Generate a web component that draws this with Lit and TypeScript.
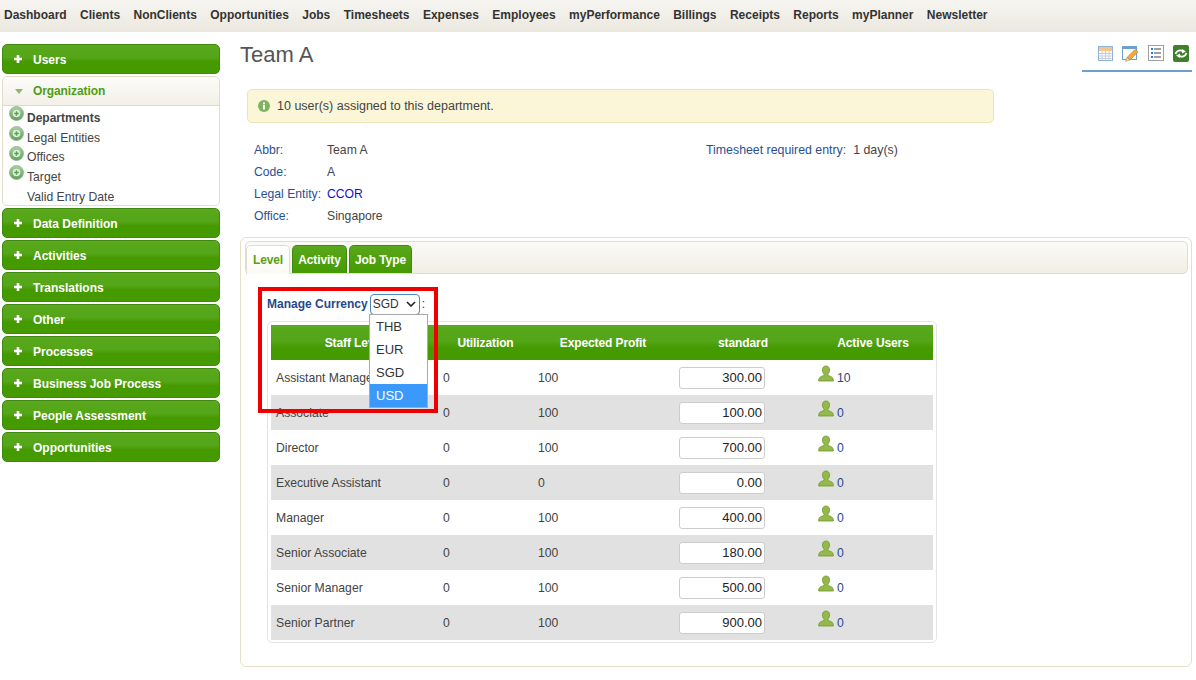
import { LitElement, html, css, svg } from "lit";
import { customElement } from "lit/decorators.js";

const NAV = ["Dashboard","Clients","NonClients","Opportunities","Jobs","Timesheets","Expenses","Employees","myPerformance","Billings","Receipts","Reports","myPlanner","Newsletter"];
const ROWS: [string,string,string,string,string][] = [
  ["Assistant Manager","0","100","300.00","10"],
  ["Associate","0","100","100.00","0"],
  ["Director","0","100","700.00","0"],
  ["Executive Assistant","0","0","0.00","0"],
  ["Manager","0","100","400.00","0"],
  ["Senior Associate","0","100","180.00","0"],
  ["Senior Manager","0","100","500.00","0"],
  ["Senior Partner","0","100","900.00","0"],
];
const plus = svg`<svg class="pl" width="10" height="10" viewBox="0 0 10 10"><path d="M5 1v8M1 5h8" stroke="#fff" stroke-width="2.6"/></svg>`;
const circ = svg`<svg class="circ" width="15" height="15" viewBox="0 0 15 15"><defs><linearGradient id="cg" x1="0" y1="0" x2="0" y2="1"><stop offset="0" stop-color="#a8d2a0"/><stop offset="1" stop-color="#5e9f58"/></linearGradient></defs><circle cx="7.5" cy="7.5" r="7" fill="url(#cg)" stroke="#8ab585" stroke-width=".8"/><circle cx="7.5" cy="7.5" r="3.8" fill="#dfeedd"/><path d="M7.5 5.200v4.600M5.200 7.500h4.600" stroke="#5e9f58" stroke-width="1.500"/></svg>`;
const person = svg`<svg class="person" width="16" height="17" viewBox="0 0 16 17"><path d="M8 1c2.300 0 3.600 1.700 3.600 3.900 0 1.800-.8 3.300-1.700 4.200v1.300c1.800.8 4.600 1.200 5.100 3.200l.4 2.400H.6L1 13.600c.5-2 3.300-2.400 5.100-3.200V9.100C5.200 8.200 4.400 6.700 4.400 4.900 4.400 2.700 5.700 1 8 1z" fill="#94b84a" stroke="#6d9a2a" stroke-width=".8"/></svg>`;

@customElement("app-root")
export class AppRoot extends LitElement {
  static styles = css`
    :host { display: block; font-family: "Liberation Sans", Arial, sans-serif; font-size: 12.2px; color: #444; background: #fff; width: 1196px; height: 680px; overflow: hidden; }
    .nav { height: 32px; display: flex; align-items: center; gap: 13.4px; padding: 0 0 3px 4px; box-sizing: border-box; background: linear-gradient(#f6f5f1, #ebe8df); font-weight: bold; font-size: 12px; color: #333; }
    .page { display: flex; padding-top: 12px; }
    .side { width: 218px; margin-left: 2px; display: flex; flex-direction: column; gap: 2px; }
    .acc { height: 30px; box-sizing: border-box; border: 1px solid #3f8a0e; border-radius: 5px; background: linear-gradient(#59a81d 0%, #55a518 45%, #459a00 60%, #459a00 100%); color: #fff; font-weight: bold; font-size: 12px; display: flex; align-items: center; padding: 1px 0 0 10px; }
    .pl { margin-right: 10px; flex: none; margin-top: -1px; }
    .org { border: 1px solid #e3dcc8; border-radius: 5px; height: 130px; box-sizing: border-box; overflow: hidden; }
    .org-h { height: 29px; box-sizing: border-box; border-bottom: 1px solid #e3d9c3; background: linear-gradient(#fdfcfa, #f3f0e8); display: flex; align-items: center; padding: 0 0 0 12px; font-weight: bold; font-size: 12px; letter-spacing: -0.1px; color: #4f9e12; }
    .tri { width: 0; height: 0; border-left: 4px solid transparent; border-right: 4px solid transparent; border-top: 5px solid #8fb86a; margin: 0 10px 0 0; }
    .org ul { list-style: none; margin: 0; padding: 2px 0 0 1px; }
    .org li { height: 19.75px; display: flex; align-items: center; position: relative; padding-left: 23px; }
    .org li.b { font-weight: bold; font-size: 12px; }
    .circ { position: absolute; left: 5px; top: -2px; }
    .main { margin-left: 20px; width: 952px; position: relative; }
    .head { display: flex; justify-content: space-between; height: 45px; }
    h1 { margin: 0; font-size: 22px; font-weight: normal; line-height: 21px; color: #555; }
    .tools { width: 107px; height: 25px; box-sizing: content-box; border-bottom: 2px solid #6f9fcc; display: flex; gap: 9px; justify-content: flex-end; padding: 2px 3px 0 0; margin-top: -1px; }
    .tools svg { flex: none; }
    .msg { margin: 0 0 0 7px; width: 747px; height: 34px; box-sizing: border-box; border: 1px solid #ede4b5; border-radius: 5px; background: #fbf6d8; display: flex; align-items: center; padding-left: 10px; gap: 7px; color: #444; font-size: 12.5px; }
    .info { margin: 16px 0 0 14px; display: flex; height: 87px; }
    .info-l { width: 452px; display: grid; grid-template-columns: 73px 1fr; grid-auto-rows: 22px; align-items: center; }
    .lbl { color: #2a4f8f; }
    .blue { color: #1010c8; }
    .info-r { display: flex; gap: 7px; height: 22px; align-items: center; font-size: 12.35px; }
    .tabs { margin-top: 11px; height: 430px; box-sizing: border-box; border: 1px solid #e6dfc8; border-radius: 6px; padding: 3px 3px 0 4px; position: relative; }
    .tabbar { height: 33px; box-sizing: border-box; border: 1px solid #e3dcc8; border-radius: 5px; background: linear-gradient(#fbfaf6, #f1eee4); display: flex; gap: 2px; padding: 3px 0 0 0; align-items: flex-end; }
    .tab { height: 28px; box-sizing: border-box; border-radius: 5px 5px 0 0; font-weight: bold; font-size: 12px; letter-spacing: -0.1px; display: flex; align-items: center; justify-content: center; color: #fff; border: 1px solid #3f8a0e; border-bottom: none; background: linear-gradient(#59a81d, #459a00); }
    .tab.on { background: linear-gradient(#fff,#fbfaf5); color: #5a9f14; border-color: #e3dcc8; margin-bottom: -1px; height: 29px; width: 44px; }
    .tab.t2 { width: 55px; }
    .tab.t3 { width: 63px; }
    .body { padding: 19px 0 0 22px; position: relative; }
    .mc { height: 22px; display: flex; align-items: center; font-weight: bold; font-size: 12px; color: #27498c; gap: 2px; }
    .sel { width: 50px; height: 21px; box-sizing: border-box; border: 1px solid #4f88bb; border-radius: 4px; font-weight: normal; color: #333; display: flex; align-items: center; padding: 0 3px 0 2px; justify-content: space-between; background:#fff; }
    .colon { font-weight: normal; color: #333; }
    .panel { width: 670px; height: 322px; box-sizing: border-box; margin-top: 6px; border: 1px solid #e4e4e4; border-radius: 5px; padding: 3px; }
    .row { display: grid; grid-template-columns: 167px 95px 140px 140px 120px; height: 35px; align-items: center; }
    .row.hd { background: linear-gradient(#59a81d 0%, #55a518 45%, #459a00 65%, #459a00 100%); color: #fff; font-weight: bold; font-size: 12px; letter-spacing: -0.1px; text-align: center; }
    .row.alt { background: #e1e1e1; }
    .row > div.c { padding-left: 5px; }
    .inp { width: 86px; height: 22px; box-sizing: border-box; border: 1px solid #ccc; border-radius: 3px; background: #fff; color: #222; font-size: 13px; text-align: right; line-height: 20px; padding-right: 2px; margin-left: 1px; }
    .cnt { display: flex; align-items: center; gap: 3px; color: #27498c; }
    .person { margin-top: -9px; }
    .drop { position: absolute; left: 124px; top: 40px; width: 59px; box-sizing: border-box; border: 1px solid #aaa; background: #fff; color: #333; font-size: 13px; z-index: 3; }
    .drop div { height: 23px; line-height: 23px; padding-left: 6px; }
    .drop .on { background: #3b99fc; color: #fff; }
    .red { position: absolute; left: 13px; top: 13px; width: 180px; height: 126px; box-sizing: border-box; border: 4px solid #ee0000; z-index: 4; pointer-events: none; }
  `;

  render() {
    const accBefore = ["Users"];
    const accAfter = ["Data Definition","Activities","Translations","Other","Processes","Business Job Process","People Assessment","Opportunities"];
    return html`
      <div class="nav">${NAV.map(n => html`<span>${n}</span>`)}</div>
      <div class="page">
        <div class="side">
          ${accBefore.map(a => html`<div class="acc">${plus}${a}</div>`)}
          <div class="org">
            <div class="org-h"><span class="tri"></span>Organization</div>
            <ul>
              <li class="b">${circ}Departments</li>
              <li>${circ}Legal Entities</li>
              <li>${circ}Offices</li>
              <li>${circ}Target</li>
              <li>Valid Entry Date</li>
            </ul>
          </div>
          ${accAfter.map(a => html`<div class="acc">${plus}${a}</div>`)}
        </div>
        <div class="main">
          <div class="head">
            <h1>Team A</h1>
            <div class="tools">
              <svg width="15" height="16" viewBox="0 0 15 16"><rect x=".5" y="1.500" width="14" height="14" fill="#fff" stroke="#8fb3d9"/><rect x="1" y="2" width="13" height="4" fill="#f9c48c"/><path d="M1 8.500h13M1 11h13M1 13.500h13M4 6v9M7.500 6v9M11 6v9" stroke="#c8ccd4" stroke-width="1"/></svg>
              <svg width="17" height="17" viewBox="0 0 17 17"><rect x=".5" y="1.500" width="14" height="13" fill="#fdfdfd" stroke="#6f9fcc"/><rect x="1" y="2" width="13" height="2" fill="#6f9fcc"/><path d="M5 12.500l8-8 3 2.500-8 8z" fill="#f2a93b" stroke="#c4842a" stroke-width=".7"/><path d="M5 12.500l-1.500 4 4.500-1.500z" fill="#f3dfb5" stroke="#8c6a30" stroke-width=".4"/></svg>
              <svg width="16" height="16" viewBox="0 0 16 16"><rect x=".5" y=".5" width="15" height="15" fill="#fff" stroke="#a0a0a0"/><path d="M6 4h7M6 8h7M6 12h7" stroke="#444" stroke-width="1.200"/><path d="M3 4h2M3 8h2M3 12h2" stroke="#2f7fd0" stroke-width="2"/></svg>
              <svg width="16" height="17" viewBox="0 0 16 17"><rect width="16" height="17" rx="2" fill="#3f7f2a"/><path d="M2.500 9c1-3.500 5-4.500 7.500-2.500M13.500 8c-1 3.500-5 4.500-7.500 2.500" fill="none" stroke="#fff" stroke-width="1.800"/><path d="M9 4l4 2.500-4 2zM7 13l-4-2.500 4-2z" fill="#fff"/></svg>
            </div>
          </div>
          <div class="msg">
            <svg width="12" height="12" viewBox="0 0 12 12"><circle cx="6" cy="6" r="6" fill="#7fb35f"/><rect x="5" y="5" width="2" height="4.500" fill="#fff"/><rect x="5" y="2.500" width="2" height="1.800" fill="#fff"/></svg>
            <span>10 user(s) assigned to this department.</span>
          </div>
          <div class="info">
            <div class="info-l">
              <span class="lbl">Abbr:</span><span>Team A</span>
              <span class="lbl">Code:</span><span>A</span>
              <span class="lbl">Legal Entity:</span><span class="blue">CCOR</span>
              <span class="lbl">Office:</span><span>Singapore</span>
            </div>
            <div class="info-r"><span class="lbl">Timesheet required entry:</span><span>1 day(s)</span></div>
          </div>
          <div class="tabs">
            <div class="tabbar">
              <div class="tab on">Level</div>
              <div class="tab t2">Activity</div>
              <div class="tab t3">Job Type</div>
            </div>
            <div class="body">
              <div class="mc"><span>Manage Currency</span>
                <span class="sel">SGD<svg width="10" height="6" viewBox="0 0 10 6"><path d="M1 1l4 4 4-4" fill="none" stroke="#222" stroke-width="1.600"/></svg></span>
                <span class="colon">:</span></div>
              <div class="panel">
                <div class="row hd"><div>Staff Level</div><div>Utilization</div><div>Expected Profit</div><div>standard</div><div>Active Users</div></div>
                ${ROWS.map((r,i) => html`<div class="row ${i%2? 'alt':''}">
                  <div class="c">${r[0]}</div><div class="c">${r[1]}</div><div class="c">${r[2]}</div>
                  <div class="c"><div class="inp">${r[3]}</div></div>
                  <div class="c cnt">${person}<span>${r[4]}</span></div>
                </div>`)}
              </div>
              <div class="drop"><div>THB</div><div>EUR</div><div>SGD</div><div class="on">USD</div></div>
              <div class="red"></div>
            </div>
          </div>
        </div>
      </div>
    `;
  }
}
